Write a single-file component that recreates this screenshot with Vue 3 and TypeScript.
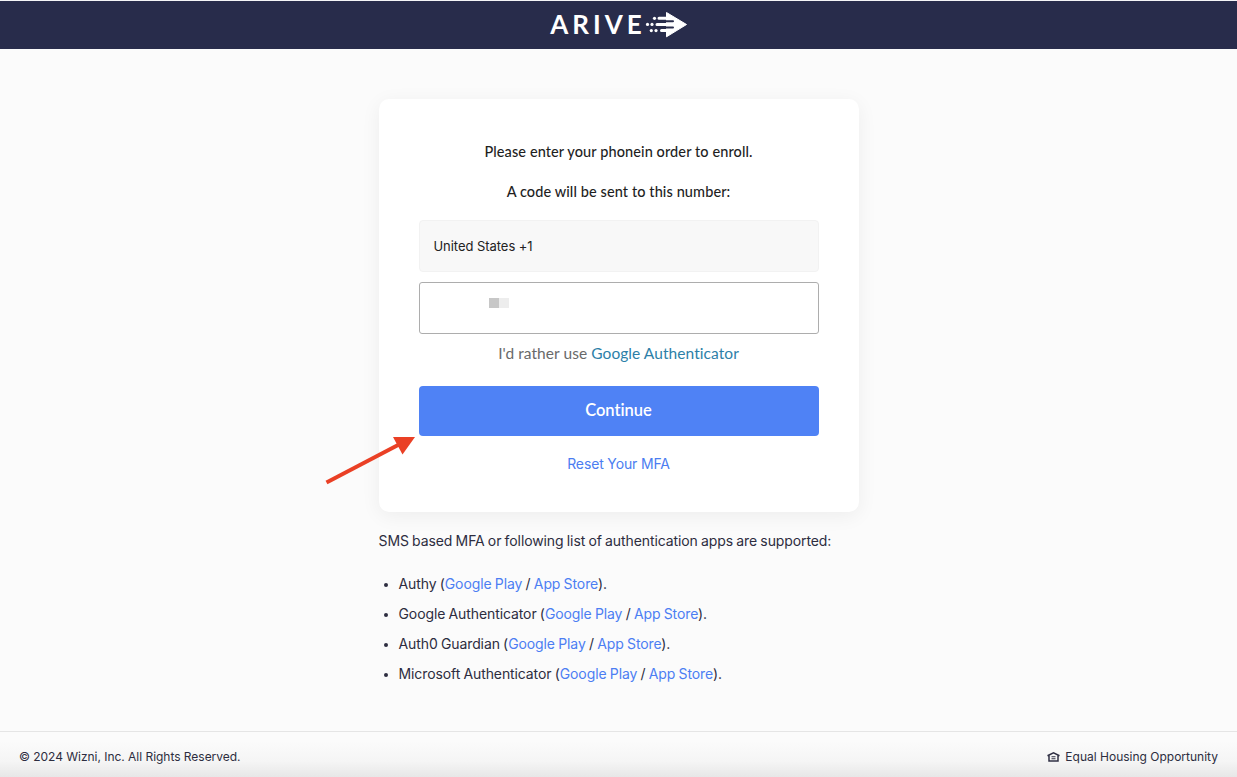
<script setup lang="ts">
import { ref } from 'vue'

interface AuthApp {
  name: string
}

const country = ref('United States +1')

const apps: AuthApp[] = [
  { name: 'Authy' },
  { name: 'Google Authenticator' },
  { name: 'Auth0 Guardian' },
  { name: 'Microsoft Authenticator' }
]
</script>

<template>
  <div class="page">
    <header class="header">
      <span class="brand">ARIVE</span>
      <svg class="brand-arrow" width="42" height="26" viewBox="0 0 42 26">
        <path d="M21.5 .5 L41.5 12.5 L21.5 24.8Z" fill="#fff" stroke="#fff" stroke-linejoin="round" />
        <path d="M12 9.3 H28 M12 15.6 H28" stroke="#282c4b" stroke-width="2" stroke-linecap="round" />
        <path d="M14 6.3 H26 M12 12.4 H30 M16.5 18.6 H26" stroke="#fff" stroke-width="3" stroke-linecap="round" />
        <g fill="#fff">
          <circle cx="9.5" cy="6.3" r="1.6" />
          <circle cx="2.5" cy="12.4" r="1.6" />
          <circle cx="7" cy="12.4" r="1.6" />
          <circle cx="6.3" cy="18.6" r="1.6" />
          <circle cx="11" cy="18.6" r="1.6" />
        </g>
      </svg>
    </header>

    <main class="content">
      <section class="card">
        <p class="prompt">Please enter your phonein order to enroll.</p>
        <p class="prompt second">A code will be sent to this number:</p>
        <div class="country">{{ country }}</div>
        <div class="phone">
          <span class="mask dark"></span>
          <span class="mask light"></span>
        </div>
        <p class="alternative">I'd rather use <a>Google Authenticator</a></p>
        <button class="continue">Continue</button>
        <a class="reset">Reset Your MFA</a>
        <svg class="pointer" width="94" height="52" viewBox="0 0 94 52">
          <path d="M2.5 47.5 L76 9" stroke="#ea4025" stroke-width="4" />
          <path d="M69 2 H91 L78.5 19.5Z" fill="#ea4025" />
        </svg>
      </section>

      <section class="supported">
        <p>SMS based MFA or following list of authentication apps are supported:</p>
        <ul>
          <li v-for="app in apps" :key="app.name">
            {{ app.name }} (<a>Google Play</a> / <a>App Store</a>).
          </li>
        </ul>
      </section>
    </main>

    <footer class="footer">
      <span class="copyright">© 2024 Wizni, Inc. All Rights Reserved.</span>
      <span class="housing">
        <svg width="13" height="11" viewBox="0 0 13 11" fill="none" stroke="#303044" stroke-width="1.5">
          <path d="M.5 4.7 L6.5 1.8 L12.5 4.7 M2 4.3 V10 H11 V4.3" />
          <path d="M4.5 5.8 H8.5 M4.5 7.8 H8.5" stroke-width="1.1" />
        </svg>
        <span>Equal Housing Opportunity</span>
      </span>
    </footer>
  </div>
</template>

<style>
body {
  margin: 0;
  overflow: hidden;
}
</style>

<style scoped>
.page {
  box-sizing: border-box;
  height: 777px;
  display: flex;
  flex-direction: column;
  border-top: 1px solid #f5f5f7;
  background: #fbfbfb;
  color: #2d2d40;
  font-family: Inter, "Liberation Sans", sans-serif;
}

.header {
  box-sizing: border-box;
  height: 48px;
  flex-shrink: 0;
  padding-bottom: 1px;
  display: flex;
  align-items: center;
  justify-content: center;
  background: #282c4b;
}

.brand {
  color: #fff;
  font: 700 26px/30px Lato, sans-serif;
  letter-spacing: 4px;
  margin-right: -1px;
  padding-bottom: 1px;
}

.content {
  flex: 1;
  width: 480px;
  margin: 50px auto 0;
}

.card {
  box-sizing: border-box;
  position: relative;
  height: 413px;
  padding: 41px 40px 40px;
  display: flex;
  flex-direction: column;
  background: #fff;
  border-radius: 10px;
  box-shadow: 0 4px 20px rgba(0, 0, 0, 0.06);
  text-align: center;
}

.prompt {
  margin: 0;
  font: 500 14.5px/24px Lato, sans-serif;
  letter-spacing: 0.1px;
  color: #1f1f1f;
}

.second {
  margin-top: 16px;
}

.country {
  box-sizing: border-box;
  height: 52px;
  flex-shrink: 0;
  margin-top: 16px;
  padding: 0 14px;
  background: #f8f8f8;
  border: 1px solid #f2f2f2;
  border-radius: 4px;
  color: #222;
  font-size: 13px;
  letter-spacing: -0.05px;
  line-height: 51px;
  text-align: left;
}

.phone {
  box-sizing: border-box;
  height: 52px;
  flex-shrink: 0;
  margin-top: 10px;
  padding: 15px 0 0 69px;
  display: flex;
  border: 1px solid #adadad;
  border-radius: 3px;
}

.mask {
  width: 10px;
  height: 10px;
}

.dark {
  background: #c7c7c7;
}

.light {
  background: #ededed;
}

.alternative {
  margin: 7px 0 0;
  font: 400 15.5px/24px Lato, sans-serif;
  letter-spacing: 0.07px;
  color: #696969;
}

.alternative a {
  color: #2d7fa8;
}

.continue {
  height: 50px;
  flex-shrink: 0;
  margin-top: 21px;
  padding: 0;
  border: 0;
  border-radius: 4px;
  background: #4f82f5;
  color: #fff;
  font: 600 16.5px/48px Lato, sans-serif;
  font-variant-ligatures: none;
  padding-bottom: 2px;
}

.reset {
  margin-top: 16px;
  color: #4b7df1;
  font-size: 14px;
  letter-spacing: -0.15px;
  line-height: 24px;
}

/* Callout arrow laid over the corner of the continue button */
.pointer {
  position: absolute;
  left: -55px;
  top: 336px;
}

.supported {
  font-size: 14px;
  letter-spacing: -0.1px;
  word-spacing: -0.55px;
}

.supported p {
  margin: 18px 0 0;
  line-height: 22px;
  white-space: nowrap;
}

.supported ul {
  margin: 17px 0 0;
  padding-left: 20px;
}

.supported li {
  line-height: 30px;
}

.supported li::marker {
  font-size: 13px;
}

.supported a {
  color: #4c7ef3;
}

.footer {
  box-sizing: border-box;
  height: 46px;
  flex-shrink: 0;
  padding: 4px 19px 0;
  display: flex;
  align-items: center;
  justify-content: space-between;
  border-top: 1px solid #e5e5e5;
  background: linear-gradient(#fbfbfb 20%, #f5f5f5 65%, #e7e7e7);
  font-size: 12px;
}

.copyright {
  letter-spacing: -0.03px;
}

.housing {
  display: flex;
  align-items: center;
  gap: 5px;
}
</style>
